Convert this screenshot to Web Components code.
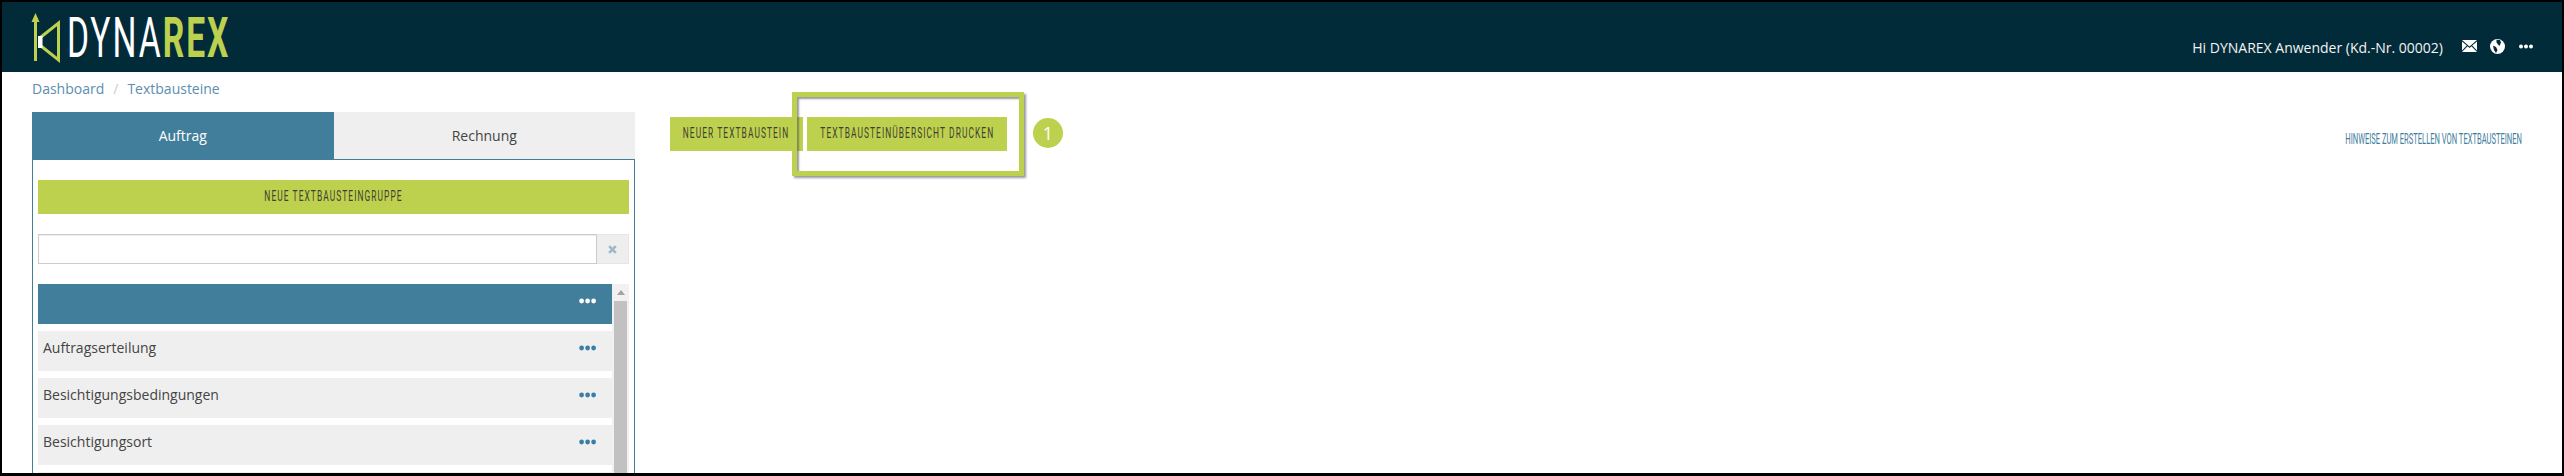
<!DOCTYPE html>
<html lang="de"><head><meta charset="utf-8"><title>Textbausteine</title>
<style>
html,body{margin:0;padding:0;background:#000}
body{height:476px;overflow:hidden;font-family:"Open Sans",sans-serif}
app-shell{height:471px;margin:2px 2px 3px 2px}
</style></head><body>
<app-shell>
  <app-header slot="header"></app-header>
  <bread-crumbs slot="crumbs"></bread-crumbs>
  <tab-panel slot="left">
    <action-button block>NEUE TEXTBAUSTEINGRUPPE</action-button>
    <search-box></search-box>
    <group-list>
      <group-row active></group-row>
      <group-row>Auftragserteilung</group-row>
      <group-row>Besichtigungsbedingungen</group-row>
      <group-row>Besichtigungsort</group-row>
      <group-row></group-row>
    </group-list>
  </tab-panel>
  <tool-bar slot="right"></tool-bar>
</app-shell>
<template id="dots"><svg width="17" height="6" viewBox="0 0 17 6" aria-hidden="true"><circle cx="2.6" cy="3" r="2.4"/><circle cx="8.6" cy="3" r="2.4"/><circle cx="14.6" cy="3" r="2.4"/></svg></template>
<script>
const dots=()=>document.getElementById('dots').innerHTML;
const def=(n,html)=>{customElements.define(n,class extends HTMLElement{constructor(){super();this.attachShadow({mode:'open'}).innerHTML=typeof html==='function'?html():html;}});};
def('app-shell',`<style>
:host{display:block;background:#fff;overflow:hidden;color:#444}
.main{display:flex;align-items:flex-start;padding:0 20px 0 30px}
.left{flex:none;width:603px}
.right{flex:1;padding-left:35px}
</style><slot name="header"></slot><slot name="crumbs"></slot>
<div class="main"><div class="left"><slot name="left"></slot></div><div class="right"><slot name="right"></slot></div></div>`);
def('app-header',`<style>
:host{display:flex;height:70px;background:#022b3a;color:#fff;box-sizing:border-box;padding:0 29px 0 31px;justify-content:space-between;position:relative}
.logo{display:flex;align-items:flex-start}
svg.mark{margin-top:11px;flex:none;overflow:visible}
.word{display:inline-block;margin:4px 0 0 4px;font:400 56px/64px Roboto,sans-serif;transform:scaleX(.6);transform-origin:0 0;white-space:nowrap;letter-spacing:3.3px;color:#fff}
.word b{font-weight:700;color:#bed14e}
.user{display:flex;align-items:center;align-self:flex-end;height:44px;margin-bottom:4px;font-size:14px;color:#f3f3f3}
.user span{margin-right:19px;position:relative;top:1px}
.user svg{flex:none;display:block}
.user svg+svg{margin-left:13px}
</style>
<div class="logo"><svg class="mark" width="30" height="52" viewBox="0 0 30 52" aria-hidden="true">
<path d="M2.5 0 L6.5 9 H4 V48 H1 V9 H-1.5 Z" fill="#bed14e"/>
<path d="M8 24 L25.5 10 V47 L8 33" fill="none" stroke="#bed14e" stroke-width="3"/>
<rect x="5" y="23" width="4.5" height="12" fill="#fff"/></svg>
<span class="word">DYNA<b>REX</b></span></div>
<div class="user"><span>Hi DYNAREX Anwender (Kd.-Nr. 00002)</span>
<svg width="15" height="12" viewBox="0 0 15 12" aria-hidden="true"><path d="M0 0H15L7.5 6.5Z M0 1.5V10.5L4.8 5.6Z M15 1.5V10.5L10.2 5.6Z M0 12L5.6 6.3 7.5 8 9.4 6.3 15 12Z" fill="#fff"/></svg>
<svg width="15" height="15" viewBox="0 0 15 15" aria-hidden="true"><circle cx="7.5" cy="7.5" r="7.5" fill="#fff"/><path d="M6.5.7 10 1l1 2.5L9.5 7 8 5.5 6.5 3.5Z M3 6.5 6 8l1.5 3-1.5 3L4 11Z" fill="#022b3a"/></svg>
<svg width="14" height="5" viewBox="0 0 14 5" style="margin-left:14px" aria-hidden="true"><circle cx="2" cy="2.5" r="2" fill="#fff"/><circle cx="7" cy="2.5" r="2" fill="#fff"/><circle cx="12" cy="2.5" r="2" fill="#fff"/></svg>
</div>`);
def('bread-crumbs',`<style>
:host{display:block;height:40px;box-sizing:border-box;padding:7px 0 0 30px;font-size:14px;line-height:19px;color:#5b8db0}
i{font-style:normal;color:#ccc;padding:0 9px}
</style>Dashboard<i>/</i>Textbausteine`);
def('tab-panel',`<style>
:host{display:block;font-size:14px}
.tabs{display:flex;height:48px}
.tabs div{flex:1;display:flex;align-items:center;justify-content:center;box-sizing:border-box;padding-bottom:1px}
.on{background:#417e9b;color:#fff}
.off{background:#efefef;color:#444;border-bottom:1px solid #417e9b}
.body{border:solid #417e9b;border-width:0 1px;padding:20px 5px 0;height:313px;overflow:hidden;display:flex;flex-direction:column;gap:20px}
</style><div class="tabs"><div class="on">Auftrag</div><div class="off">Rechnung</div></div><div class="body"><slot></slot></div>`);
def('action-button',`<style>
:host{display:inline-flex;flex:none;align-items:center;justify-content:center;height:34px;background:#bed14e;color:#3f3f33;overflow:hidden;white-space:nowrap}
:host([block]){display:flex}
span{display:inline-block;font:400 15px/32px Roboto,sans-serif;letter-spacing:1.9px;transform:scaleX(.56);margin:0 -70px 2px}
</style><span><slot></slot></span>`);
def('search-box',`<style>
:host{display:flex;flex:none;height:30px}
.in{flex:1;border:1px solid #ccc;background:#fff;box-shadow:inset 0 1px 1px rgba(0,0,0,.08)}
.x{width:32px;background:#eee;border:1px solid #e6e6e6;border-left:0;box-sizing:border-box;display:flex;align-items:center;justify-content:center}
</style><div class="in"></div><div class="x"><svg width="9" height="9" viewBox="0 0 9 9" aria-hidden="true"><path d="M1.2 1.2 7.8 7.8M7.8 1.2 1.2 7.8" stroke="#9bb9c9" stroke-width="2.6"/></svg></div>`);
def('group-list',`<style>
:host{display:flex;flex:none;height:300px;overflow:hidden}
.l{flex:none;width:574px;display:flex;flex-direction:column;gap:7px}
.s{flex:1;background:#f1f1f1;display:flex;flex-direction:column;align-items:center}
.a{height:17px;flex:none;display:flex;align-items:center;justify-content:center}
.t{width:13px;flex:1;background:#c1c1c1}
</style><div class="l"><slot></slot></div><div class="s"><div class="a"><svg width="8" height="5" viewBox="0 0 8 5" aria-hidden="true"><path d="M4 0 8 5H0Z" fill="#a3a3a3"/></svg></div><div class="t"></div></div>`);
def('group-row',()=>`<style>
:host{flex:none;display:flex;justify-content:space-between;height:40px;box-sizing:border-box;padding:7px 16px 0 5px;background:#efefef;color:#444;line-height:20px}
:host([active]){background:#417e9b;color:#fff}
svg{margin-top:7px;fill:#3a7ea8}
:host([active]) svg{fill:#fff}
</style><span><slot></slot></span>${dots()}`);
def('tool-bar',`<style>
:host{display:flex;align-items:flex-start;padding-top:5px;position:relative;height:60px}
.wrap{display:flex;gap:4px}
.box{position:absolute;left:122px;top:-20px;width:222px;height:74px;border:5px solid #bed14e;box-shadow:2px 2px 2px rgba(70,70,80,.55),inset 2px 2px 2px rgba(70,70,80,.55);pointer-events:none}
.num{position:absolute;left:363px;top:6px;width:30px;height:30px;border-radius:50%;background:#bed14e;color:#fff;font:400 18px/30px "Open Sans",sans-serif;text-align:center}
.hint{margin-left:auto;margin-top:14px;margin-right:20px;font:400 14px/16px Roboto,sans-serif;color:#417e9b;white-space:nowrap;width:178px;display:flex;justify-content:flex-end}
.hint span{display:inline-block;transform:scaleX(.54);transform-origin:100% 50%}
</style>
<div class="wrap"><action-button style="width:133px">NEUER TEXTBAUSTEIN</action-button><action-button style="width:200px">TEXTBAUSTEINÜBERSICHT DRUCKEN</action-button></div>
<div class="box"></div><div class="num">1</div>
<div class="hint"><span>HINWEISE ZUM ERSTELLEN VON TEXTBAUSTEINEN</span></div>`);
</script>
</body></html>
